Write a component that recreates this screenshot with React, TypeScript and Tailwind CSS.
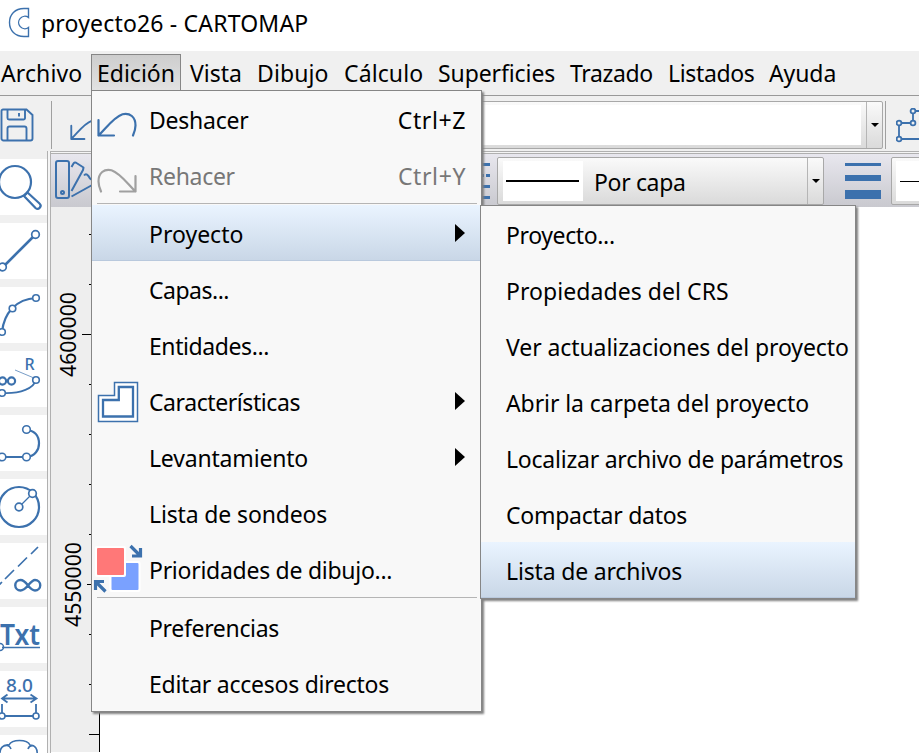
import type { ReactNode } from 'react';
import clsx from 'clsx';

interface MenuEntry {
  label: string;
  shortcut?: string;
  icon?: ReactNode;
  disabled?: boolean;
  active?: boolean;
  submenu?: boolean;
  separatorAfter?: boolean;
  tracking?: string;
}

const BLUE = '#3c71ad';

function LogoIcon() {
  return (
    <svg width="22" height="31" viewBox="0 0 22 31" fill="none" stroke={BLUE} strokeWidth="1.4">
      <path d="M20.500 1.500H16C7 1.500 1.500 7.500 1.500 15.500S7 29.500 16 29.500h4.500V20.500a6.200 6.200 0 1 1 0-10Z" />
    </svg>
  );
}

function SaveIcon() {
  return (
    <svg width="34" height="34" viewBox="0 0 34 34" fill="none" stroke={BLUE} strokeWidth="1.9">
      <path d="M3 1.500h23.500l6 5.500v23.500a2 2 0 0 1-2 2H3.500a2 2 0 0 1-2-2V3a1.500 1.500 0 0 1 1.500-1.500Z" />
      <path d="M7.500 1.500v8.500a1.500 1.500 0 0 0 1.500 1.500h14.500a1.500 1.500 0 0 0 1.500-1.500V1.500M7.500 32.500v-12a2 2 0 0 1 2-2h15a2 2 0 0 1 2 2v12M19 5v3.500" />
    </svg>
  );
}

function UndoIcon({ size = 40, className, color = BLUE }: { size?: number; className?: string; color?: string }) {
  return (
    <svg
      width={size}
      height={size * 0.65}
      viewBox="0 0 40 26"
      fill="none"
      stroke={color}
      strokeWidth="2.2"
      strokeLinecap="round"
      strokeLinejoin="round"
      className={clsx('shrink-0', className)}
    >
      <path d="M1.500 8v15.500h15.500M1.500 23.500C10 15 17 5 25.500 2.200C33 .5 38.500 5 38.500 13.500c0 3.500-1 6.500-2.500 10" />
    </svg>
  );
}

function CharacteristicsIcon() {
  return (
    <svg width="42" height="42" viewBox="0 0 42 42" fill="none" stroke={BLUE} className="-mt-px shrink-0">
      <path d="M1.500 14.500h16v-13h23v39h-39Z" strokeWidth="1.500" fill="#fff" />
      <path d="M6 19h15.800V6H36v29.500H6Z" strokeWidth="2.300" />
    </svg>
  );
}

function PrioritiesIcon() {
  return (
    <svg width="50" height="50" viewBox="0 0 50 50" className="-mt-[2px] -ml-1 shrink-0">
      <rect x="16.500" y="17" width="31" height="31" rx="2" fill="#fff" />
      <rect x="18.500" y="19" width="27" height="27" rx="1" fill="#7aa1ff" />
      <rect x="2" y="2" width="31" height="31" rx="2" fill="#fff" />
      <rect x="4" y="4" width="27" height="27" rx="1" fill="#ff7878" />
      <g fill="none" stroke={BLUE} strokeWidth="3.200">
        <path d="M37.500 2l9 9M47.500 4v8H39" />
        <path d="M12.500 47.500l-9-9M2.500 46v-8.500H11" />
      </g>
    </svg>
  );
}

function PaletteIcon() {
  return (
    <svg width="42" height="42" viewBox="0 0 42 42" fill="none" stroke={BLUE} strokeWidth="2" strokeLinejoin="round">
      <rect x="2" y="2" width="13" height="37" rx="2" />
      <circle cx="8.500" cy="33.500" r="1.500" />
      <path d="M17.500 8l2-3.500a2 2 0 0 1 3-.5l7 4.500-.5 2.500L17.500 32M30 16.500c2-2.500 4-1 6 3l4 3M17.500 37.500L40 25" />
    </svg>
  );
}

function PolylineIcon() {
  return (
    <svg width="26" height="38" viewBox="0 0 26 38" fill="#f0f0f0" stroke={BLUE} strokeWidth="1.800">
      <path d="M28 3H17v12H3v16h25" fill="none" />
      <circle cx="17" cy="3" r="2.400" />
      <circle cx="17" cy="15" r="2.400" />
      <circle cx="3" cy="15" r="2.400" />
      <circle cx="3" cy="31" r="2.400" />
    </svg>
  );
}

// Drawing tools, each one on a 47x56 tile
const TOOLS: { id: string; drawing: ReactNode }[] = [
  {
    id: 'zoom',
    drawing: (
      <>
        <circle cx="15" cy="23" r="16" />
        <path d="M24 37l3.500-3.500 12 11a3 3 0 0 1-4 4.500Z" strokeLinejoin="round" />
      </>
    ),
  },
  {
    id: 'line',
    drawing: (
      <>
        <path d="M3 44L35 12" strokeWidth="2.600" />
        <circle cx="2.500" cy="44" r="3.800" strokeWidth="1.700" fill="#fff" />
        <circle cx="35.500" cy="11.500" r="3.800" strokeWidth="1.700" fill="#fff" />
      </>
    ),
  },
  {
    id: 'arc',
    drawing: (
      <>
        <path d="M2 45C4 26 16 12 36 11" />
        <circle cx="2" cy="45" r="3.300" strokeWidth="1.600" fill="#fff" />
        <circle cx="12.500" cy="21.500" r="3.300" strokeWidth="1.600" fill="#fff" />
        <circle cx="36" cy="11" r="3.300" strokeWidth="1.600" fill="#fff" />
      </>
    ),
  },
  {
    id: 'curve',
    drawing: (
      <>
        <path d="M15 19l19 8" strokeWidth=".7" />
        <path d="M2 42c19 1 32-5 34-13" strokeWidth="1.800" />
        <circle cx="2" cy="42" r="3.300" strokeWidth="1.600" fill="#fff" />
        <circle cx="36" cy="29" r="3.300" strokeWidth="1.600" fill="#fff" />
        <circle cx="2.500" cy="30" r="3.600" />
        <circle cx="11.500" cy="30" r="3.600" />
        <text x="24.500" y="19" fontSize="16" stroke="none" fill={BLUE} fontWeight="500">
          R
        </text>
      </>
    ),
  },
  {
    id: 'line-arc',
    drawing: (
      <>
        <path d="M2 42h25c8-1 12-7 12-13.500C39 21 35 16 27 15" />
        <circle cx="2" cy="42" r="3.800" strokeWidth="1.600" fill="#fff" />
        <circle cx="26.500" cy="42" r="3.800" strokeWidth="1.600" fill="#fff" />
        <circle cx="26.500" cy="14.500" r="3.800" strokeWidth="1.600" fill="#fff" />
      </>
    ),
  },
  {
    id: 'circle',
    drawing: (
      <>
        <circle cx="19" cy="28" r="20" />
        <path d="M19 28l13-13" strokeWidth="1.300" />
        <circle cx="19" cy="28" r="3.800" strokeWidth="1.700" fill="#fff" />
        <circle cx="32.500" cy="14.500" r="3.800" strokeWidth="1.700" fill="#fff" />
      </>
    ),
  },
  {
    id: 'construction',
    drawing: (
      <>
        <path d="M38 4l-7 7M27 14.500l-9 9M14 27l-9 9M2 39l-3 3" strokeWidth="1.700" />
        <path
          d="M28 42.500c-3-4-5-5.500-7.500-5.500a5 5 0 0 0 0 10.500c2.500 0 4.500-1.500 7.500-5s5-5.500 7-5.500a5 5 0 0 1 0 10.500c-2.500 0-4.500-2-7-5Z"
          strokeWidth="2.400"
        />
      </>
    ),
  },
  {
    id: 'text',
    drawing: (
      <>
        <path d="M2 40.500h38" strokeWidth="1.300" />
        <circle cx="0" cy="40" r="3.500" strokeWidth="1.500" />
        <text x="0" y="37.500" fontSize="29" stroke="none" fill={BLUE} fontWeight="600" textLength="40" lengthAdjust="spacingAndGlyphs">
          Txt
        </text>
      </>
    ),
  },
  {
    id: 'dimension',
    drawing: (
      <>
        <text x="6" y="21" fontSize="18" stroke="none" fill={BLUE} fontWeight="500" textLength="27" lengthAdjust="spacingAndGlyphs">
          8.0
        </text>
        <path d="M2 27.500h34M7.500 23.500l-5.500 4 5.500 4M30.500 23.500l6 4-6 4" strokeWidth="1.800" />
        <path d="M2 33v12h34V33" strokeWidth="1.800" />
        <circle cx="2" cy="45" r="3" strokeWidth="1.600" fill="#fff" />
        <circle cx="36" cy="45" r="3" strokeWidth="1.600" fill="#fff" />
      </>
    ),
  },
  {
    id: 'cloud',
    drawing: <path d="M0 20c-1-6 3-11 9-10 3-6 18-6 21 0 5 0 8 4 7 10M4 11c3-1 6 0 7 3M34 11c-3-1-5 0-6 3" strokeWidth="1.600" />,
  },
];

const MENU_BAR = [
  { label: 'Archivo', className: 'w-[91px] pl-px tracking-[0.1px]' },
  { label: 'Edición', className: 'w-[90px] border border-[#868686] bg-linear-to-b from-[#cdcdcd] to-[#e2e2e2] pl-[5px]' },
  { label: 'Vista', className: 'w-[67px] pl-[9px]' },
  { label: 'Dibujo', className: 'w-[87px] pl-[9px] tracking-[0.1px]' },
  { label: 'Cálculo', className: 'w-[94px] pl-[9px] tracking-[0.1px]' },
  { label: 'Superficies', className: 'w-[132px] pl-[9px] tracking-[-0.1px]' },
  { label: 'Trazado', className: 'w-[98px] pl-[9px] tracking-[-0.35px]' },
  { label: 'Listados', className: 'w-[101px] pl-[9px] tracking-[-0.35px]' },
  { label: 'Ayuda', className: 'w-[90px] pl-[9px] tracking-[-0.1px]' },
];

const EDIT_MENU: MenuEntry[] = [
  { label: 'Deshacer', shortcut: 'Ctrl+Z', icon: <UndoIcon className="mt-[9px]" />, tracking: 'tracking-[-0.25px]' },
  {
    label: 'Rehacer',
    shortcut: 'Ctrl+Y',
    icon: <UndoIcon color="#a0a0a0" className="mt-[9px] -scale-x-100" />,
    disabled: true,
    separatorAfter: true,
    tracking: 'tracking-[-0.3px]',
  },
  { label: 'Proyecto', active: true, submenu: true },
  { label: 'Capas...', tracking: 'tracking-[-0.5px]' },
  { label: 'Entidades...', tracking: 'tracking-[-0.42px]' },
  { label: 'Características', icon: <CharacteristicsIcon />, submenu: true, tracking: 'tracking-[-0.42px]' },
  { label: 'Levantamiento', submenu: true, tracking: 'tracking-[-0.18px]' },
  { label: 'Lista de sondeos', tracking: 'tracking-[-0.14px]' },
  { label: 'Prioridades de dibujo...', icon: <PrioritiesIcon />, separatorAfter: true, tracking: 'tracking-[-0.27px]' },
  { label: 'Preferencias', tracking: 'tracking-[-0.33px]' },
  { label: 'Editar accesos directos', tracking: 'tracking-[-0.25px]' },
];

const PROJECT_MENU: MenuEntry[] = [
  { label: 'Proyecto...', tracking: 'tracking-[-0.38px]' },
  { label: 'Propiedades del CRS', tracking: 'tracking-[0.06px]' },
  { label: 'Ver actualizaciones del proyecto', tracking: 'tracking-[-0.08px]' },
  { label: 'Abrir la carpeta del proyecto', tracking: 'tracking-[-0.1px]' },
  { label: 'Localizar archivo de parámetros', tracking: 'tracking-[-0.23px]' },
  { label: 'Compactar datos', tracking: 'tracking-[-0.26px]' },
  { label: 'Lista de archivos', active: true, tracking: 'tracking-[-0.17px]' },
];

function MenuItem({ entry, nested = false }: { entry: MenuEntry; nested?: boolean }) {
  return (
    <>
      <div
        className={clsx(
          'flex h-14 items-center',
          entry.disabled && 'text-[#777]',
          entry.active ? 'border-b border-[#b9c9dd] bg-linear-to-b from-[#eaf4ff] to-[#c9d7e7] pt-[4px]' : 'pt-[2px]',
          nested && 'pl-[25px]',
        )}
      >
        {!nested && <span className="flex w-[57px] shrink-0 items-center pl-[5px]">{entry.icon}</span>}
        <span className={clsx('grow whitespace-nowrap', entry.tracking)}>{entry.label}</span>
        {entry.shortcut && <span className="pr-[15px] tracking-[0.6px]">{entry.shortcut}</span>}
        {entry.submenu && (
          <svg width="10" height="18" viewBox="0 0 10 18" className="-mt-[3px] mr-[16px]">
            <path d="M0 0l10 9-10 9Z" />
          </svg>
        )}
      </div>
      {entry.separatorAfter && <div className="mr-[4px] ml-[5px] h-0.5 border-t border-[#b5b5b5]" />}
    </>
  );
}

function ComboArrow() {
  return (
    <div className="flex h-full w-4 shrink-0 items-center justify-center border-l border-[#b5b5b5]">
      <svg width="8" height="4" viewBox="0 0 8 4">
        <path d="M0 0h8L4 4Z" />
      </svg>
    </div>
  );
}

function Ruler() {
  return (
    <svg width="49" height="545" viewBox="0 0 49 545" className="shrink-0 bg-[#eeeeee]">
      <path
        d="M38 27.500h10M38 77.500h10M31 127.500h17M38 177.500h10M38 227.500h10M38 277.500h10M38 327.500h10M36 377.500h12M38 427.500h10M38 477.500h10M38 527.500h10M48.500 0v545"
        stroke="#000"
        fill="none"
      />
      <text transform="translate(25 170) rotate(-90)" fontSize="22" textLength="85" lengthAdjust="spacingAndGlyphs">
        4600000
      </text>
      <text transform="translate(29.500 420) rotate(-90)" fontSize="22" textLength="85" lengthAdjust="spacingAndGlyphs">
        4550000
      </text>
    </svg>
  );
}

export default function App() {
  return (
    <div className="relative flex h-[753px] w-[919px] flex-col overflow-hidden bg-white font-['Noto_Sans','Open_Sans',sans-serif] text-[23px] leading-none text-black">
      <header className="flex h-[51px] shrink-0 items-start pt-[7px] pl-[8px]">
        <LogoIcon />
        <h1 className="mt-[5px] ml-[11px] tracking-[0.18px] whitespace-nowrap">proyecto26 - CARTOMAP</h1>
      </header>

      <nav className="flex h-[45px] shrink-0 border-b border-[#999] bg-[#f0f0f0] pt-[3px]">
        {MENU_BAR.map((item) => (
          <div key={item.label} className={clsx('flex h-[37px] shrink-0 items-center pt-[2px] whitespace-nowrap', item.className)}>
            {item.label}
          </div>
        ))}
      </nav>

      <div className="flex h-[55px] shrink-0 items-start bg-[#f0f0f0] pt-[5px]">
        <div className="flex h-12 w-[52px] shrink-0 items-center border-r border-[#a0a0a0]">
          <SaveIcon />
        </div>
        <div className="w-[88px] shrink-0 pt-[18px] pl-[18px]">
          <UndoIcon size={34} />
        </div>
        <div className="flex h-12 w-[743px] shrink-0 items-center rounded-[2px] border border-[#a8a8a8] bg-linear-to-b from-[#fafafa] to-[#dadada]">
          <div className="mr-[5px] h-10 grow bg-white" />
          <ComboArrow />
        </div>
        <div className="ml-[2px] h-12 w-px shrink-0 bg-[#a0a0a0]" />
        <div className="shrink-0 pt-[7px] pl-[9.500px]">
          <PolylineIcon />
        </div>
      </div>

      <div className="flex min-h-0 grow">
        <aside className="flex w-[47px] shrink-0 flex-col gap-2 bg-[#f0f0f0] pt-2">
          {TOOLS.map((tool) => (
            <svg key={tool.id} width="47" height="56" viewBox="0 0 47 56" fill="none" stroke={BLUE} strokeWidth="2.200" className="shrink-0 bg-white">
              {tool.drawing}
            </svg>
          ))}
        </aside>
        <div className="w-1 shrink-0 border-x border-[#b0b0b0] bg-[#f5f5f5]" />

        <main className="flex min-w-0 grow flex-col">
          <div className="h-[3px] shrink-0 border-y border-[#b0b0b0] bg-[#f5f5f5]" />
          <div className="flex h-[53px] shrink-0 items-start bg-linear-to-b from-[#e8e7ee] to-[#c9c9cf] pt-[3px]">
            <div className="w-[411px] shrink-0 pt-[2px] pl-[3px]">
              <PaletteIcon />
            </div>
            <svg width="28" height="44" viewBox="0 0 28 44" stroke={BLUE} strokeWidth="3" className="shrink-0">
              <path d="M0 7.500h28M0 29.500h28M0 40.500h28" />
              <path d="M0 18.500h28" strokeDasharray="4 2" />
            </svg>
            <div className="ml-[7px] flex h-12 w-[327px] shrink-0 items-center rounded-[2px] border border-[#a8a8a8] bg-linear-to-b from-[#fafafa] to-[#dadada]">
              <div className="ml-[5px] flex h-10 w-20 items-center bg-white pl-[3px]">
                <div className="h-0.5 w-[73px] bg-black" />
              </div>
              <span className="grow pt-[3px] pl-[11px] tracking-[-0.35px]">Por capa</span>
              <ComboArrow />
            </div>
            <div className="ml-[21px] flex w-9 shrink-0 flex-col pt-[6px]">
              <div className="h-[3px] bg-[#3c71ad]" />
              <div className="mt-[9px] h-[6px] bg-[#3c71ad]" />
              <div className="mt-[9px] h-[9px] bg-[#3c71ad]" />
            </div>
            <div className="ml-[10px] flex h-12 w-20 shrink-0 items-center rounded-[2px] border border-[#a8a8a8] bg-linear-to-b from-[#fafafa] to-[#dadada] pl-[4px]">
              <div className="flex h-10 w-20 shrink-0 items-center bg-white pl-[4px]">
                <div className="h-px w-16 bg-black" />
              </div>
            </div>
          </div>
          <div className="flex grow">
            <Ruler />
          </div>
        </main>
      </div>

      <div className="absolute top-[90px] left-[91px] w-[391px] border border-[#868686] bg-[#f8f8f8] shadow-[2px_2px_2px_#808080]">
        {EDIT_MENU.map((entry) => (
          <MenuItem key={entry.label} entry={entry} />
        ))}
      </div>

      <div className="absolute top-[205px] left-[480px] w-[376px] border border-[#868686] bg-[#f8f8f8] shadow-[2px_2px_2px_#808080]">
        {PROJECT_MENU.map((entry) => (
          <MenuItem key={entry.label} entry={entry} nested />
        ))}
      </div>
    </div>
  );
}
